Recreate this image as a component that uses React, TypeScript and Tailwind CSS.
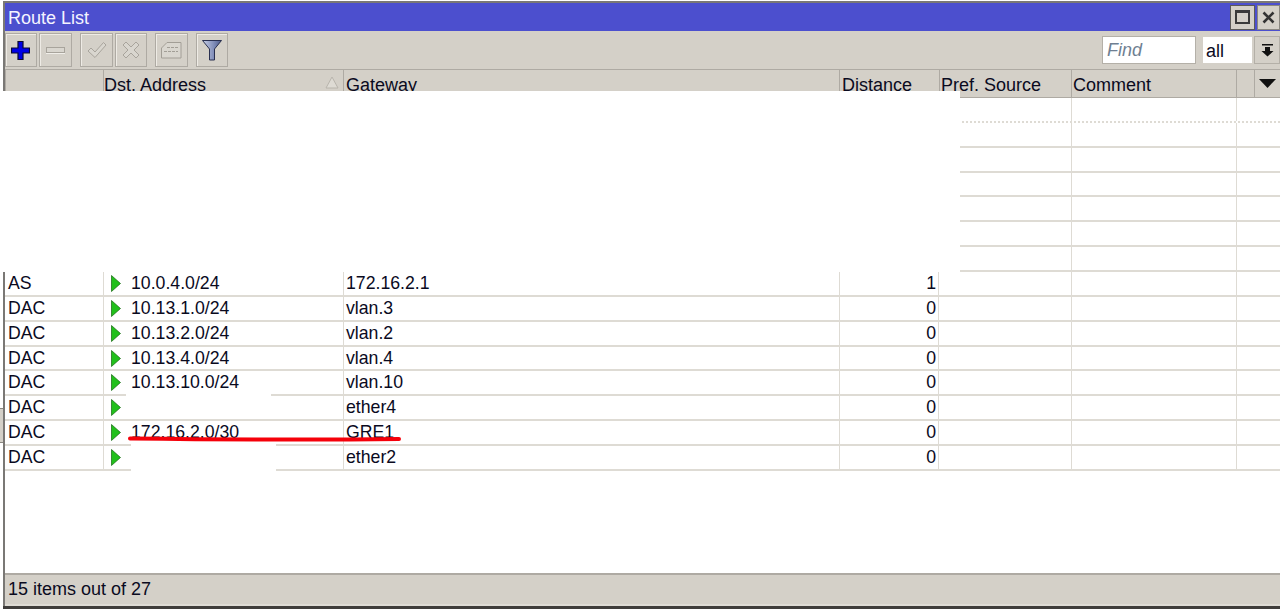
import React from 'react';

const rows = [
  { flags: 'AS', dst: '10.0.4.0/24', gateway: '172.16.2.1', distance: '1' },
  { flags: 'DAC', dst: '10.13.1.0/24', gateway: 'vlan.3', distance: '0' },
  { flags: 'DAC', dst: '10.13.2.0/24', gateway: 'vlan.2', distance: '0' },
  { flags: 'DAC', dst: '10.13.4.0/24', gateway: 'vlan.4', distance: '0' },
  { flags: 'DAC', dst: '10.13.10.0/24', gateway: 'vlan.10', distance: '0', mask: 'left-[22px] w-[145px]' },
  { flags: 'DAC', dst: '', gateway: 'ether4', distance: '0' },
  { flags: 'DAC', dst: '172.16.2.0/30', gateway: 'GRE1', distance: '0', mask: 'left-[27px] w-[145px]' },
  { flags: 'DAC', dst: '', gateway: 'ether2', distance: '0', mask: 'left-[27px] w-[145px]' },
];

function ToolButton({ className, children }: { className: string; children: React.ReactNode }) {
  return (
    <div className={`h-[34px] flex items-center justify-center border border-[#aeaaa3] shadow-[inset_1px_1px_0_#eeebe5] ${className}`}>
      {children}
    </div>
  );
}

function Arrow() {
  return (
    <svg width="10" height="17" viewBox="0 0 10 17" className="absolute left-[7px] top-[3px]">
      <path d="M0.5 0.5 L9.5 8.5 L0.5 16.5 Z" fill="#22c01c" stroke="#14660f" strokeWidth="0.7" />
    </svg>
  );
}

function EmptyRow({ first }: { first?: boolean }) {
  return (
    <div className={`flex h-[24.86px] border-b-2 border-[#dedbd4] ${first ? 'border-dotted border-[#a8a49c]' : ''}`}>
      <div className="w-[98px]" />
      <div className="w-[240px] border-l border-[#dedbd4]" />
      <div className="w-[496px] border-l border-[#dedbd4]" />
      <div className="w-[100px] border-l border-[#dedbd4]" />
      <div className="w-[132px] border-l border-[#dedbd4]" />
      <div className="w-[165px] border-l border-[#dedbd4]" />
      <div className="flex-1 border-l border-[#dedbd4]" />
    </div>
  );
}

export default function App() {
  return (
    <div className="relative w-[1280px] h-[609px] overflow-hidden bg-white text-[18px] leading-[22px] text-[#0a0a1e] font-['Liberation_Sans',Arial,sans-serif]">
      <div className="h-[605px] mt-px ml-[3px] flex flex-col border-t-2 border-l-2 border-[#7a7875] bg-white">
        {/* Title bar */}
        <div className="h-[28px] bg-[#4c4fce] flex items-center pl-[3px] text-[#f4f4ff]">
          <span className="flex-1 pt-[2px]">Route List</span>
          <div className="w-[25px] h-[25px] mr-[2px] flex items-center justify-center bg-[#d4d0c8] border border-[#5c5a58]">
            <div className="w-[15px] h-[14px] border-2 border-t-[3px] border-[#3a3a3a]" />
          </div>
          <div className="w-[23px] h-[25px] flex items-center justify-center bg-[#d4d0c8] border border-[#8a8780]">
            <svg width="13" height="13" viewBox="0 0 13 13">
              <path d="M1.5 1.5 L11.5 11.5 M11.5 1.5 L1.5 11.5" stroke="#333" strokeWidth="2.6" />
            </svg>
          </div>
        </div>

        {/* Toolbar */}
        <div className="h-[38px] bg-[#d4d0c8] flex items-center">
          <ToolButton className="w-[32px] pr-[2px]">
            <svg width="19" height="19" viewBox="0 0 19 19">
              <path d="M7 0.5 H12 V7 H18.5 V12 H12 V18.5 H7 V12 H0.5 V7 H7 Z" fill="#0000e6" stroke="#0a0a30" strokeWidth="1.2" />
            </svg>
          </ToolButton>
          <ToolButton className="w-[33px] ml-[2px]">
            <div className="w-[19px] h-[6px] border border-[#a8a49c] bg-[#d9d6cf] shadow-[0_1px_0_#f0eee9]" />
          </ToolButton>
          <ToolButton className="w-[33px] ml-[8px]">
            <svg width="20" height="18" viewBox="0 0 20 18">
              <path d="M1 10 L4 7 L8 11 L16.5 1.5 L19 4 L8 16.5 Z" fill="#d9d6cf" stroke="#a8a49c" strokeWidth="1" />
            </svg>
          </ToolButton>
          <ToolButton className="w-[32px] ml-[2px]">
            <svg width="18" height="18" viewBox="0 0 18 18">
              <path d="M4 1 L9 6 L14 1 L17 4 L12 9 L17 14 L14 17 L9 12 L4 17 L1 14 L6 9 L1 4 Z" fill="#d9d6cf" stroke="#a8a49c" strokeWidth="1" />
            </svg>
          </ToolButton>
          <ToolButton className="w-[33px] ml-[8px]">
            <svg width="21" height="17" viewBox="0 0 21 17">
              <path d="M0.5 6 L6 0.5 H20 V16 H0.5 Z" fill="#d9d6cf" stroke="#a29e96" strokeWidth="1" />
              <path d="M6 5.5 H17 M3 9.5 H17" stroke="#a29e96" strokeWidth="1" strokeDasharray="3 1" />
            </svg>
          </ToolButton>
          <ToolButton className="w-[32px] ml-[8px]">
            <svg width="20" height="21" viewBox="0 0 20 21">
              <defs>
                <linearGradient id="funnel" x1="0" x2="1" y1="0" y2="0">
                  <stop offset="0" stopColor="#c9d0e6" />
                  <stop offset="0.6" stopColor="#7f8cb8" />
                  <stop offset="1" stopColor="#4d5a8a" />
                </linearGradient>
              </defs>
              <path d="M0.5 0.5 H19.5 L12.5 9 V20 H7.5 V9 Z" fill="url(#funnel)" stroke="#2a3050" strokeWidth="1" />
            </svg>
          </ToolButton>
          <div className="flex-1" />
          <div className="w-[94px] h-[28px] bg-white border border-[#b4b0a8] pl-[4px] italic text-[#6f7f92] leading-[26px]">Find</div>
          <div className="w-[51px] h-[28px] ml-[6px] bg-white border border-[#d4d0c8] pl-[3px] leading-[28px]">all</div>
          <div className="w-[26px] h-[28px] ml-[1px] flex items-center justify-center border border-[#b4b0a8]">
            <svg width="13" height="14" viewBox="0 0 13 14">
              <path d="M1 1 H12 V2.5 H1 Z M4 4 H9 V8 H12.5 L6.5 13.5 L0.5 8 H4 Z" fill="#111" />
            </svg>
          </div>
        </div>

        {/* Column header */}
        <div className="h-[29px] flex bg-[#d4d0c8] border-y border-[#aeaaa3] leading-[30px]">
          <div className="w-[98px] border-l border-[#aeaaa3]" />
          <div className="w-[240px] border-l border-[#aeaaa3] relative">
            Dst. Address
            <svg width="14" height="13" viewBox="0 0 14 13" className="absolute right-[4px] top-[6px]">
              <path d="M7 1 L13 12 H1 Z" fill="#dedbd4" stroke="#b8b4ac" strokeWidth="1" />
            </svg>
          </div>
          <div className="w-[496px] border-l border-[#aeaaa3] pl-[2px]">Gateway</div>
          <div className="w-[100px] border-l border-[#aeaaa3] pl-[2px]">Distance</div>
          <div className="w-[132px] border-l border-[#aeaaa3] pl-[1px]">Pref. Source</div>
          <div className="w-[165px] border-l border-[#aeaaa3] pl-[1px]">Comment</div>
          <div className="w-[18px] border-l border-[#aeaaa3]" />
          <div className="flex-1 border-l border-[#aeaaa3] flex items-center justify-center">
            <svg width="17" height="9" viewBox="0 0 17 9">
              <path d="M0 0 H17 L8.5 9 Z" fill="#111" />
            </svg>
          </div>
        </div>

        {/* Table body */}
        <div className="flex-1 text-[17.7px]">
          <EmptyRow first />
          {Array.from({ length: 6 }).map((_, i) => (
            <EmptyRow key={i} />
          ))}
          {rows.map((row) => (
            <div key={row.flags + row.gateway} className="flex h-[24.86px] border-b-2 border-[#dedbd4]">
              <div className="w-[98px] pl-[3px]">{row.flags}</div>
              <div className="w-[240px] border-l border-[#dedbd4] pl-[27px] relative">
                <Arrow />
                {row.dst}
                {row.mask && <div className={`absolute top-[22.86px] h-[2px] bg-white ${row.mask}`} />}
              </div>
              <div className="w-[496px] border-l border-[#dedbd4] pl-[2px]">{row.gateway}</div>
              <div className="w-[100px] border-l border-r border-[#dedbd4] text-right pr-[2px]">{row.distance}</div>
              <div className="w-[132px]" />
              <div className="w-[165px] border-l border-[#dedbd4]" />
              <div className="flex-1 border-l border-[#dedbd4]" />
            </div>
          ))}
        </div>

        {/* Status bar */}
        <div className="h-[33px] bg-[#d4d0c8] border-t-2 border-b-2 border-t-[#aeaaa3] border-b-[#dedbd4] pl-[3px] leading-[28px]">15 items out of 27</div>
      </div>
      <div className="h-[3px] bg-[#3f3d3b] ml-[3px]" />

      {/* White box pasted over the hidden routes */}
      <div className="absolute left-0 top-[91px] w-[960px] h-[181px] bg-white" />

      {/* Edge of the window behind */}
      <div className="absolute left-0 top-[408px] w-[3px] h-[35px] bg-[#d4d0c8] border-y border-[#8a8780]" />

      {/* Red pen mark */}
      <svg width="280" height="8" viewBox="0 0 280 8" className="absolute left-[125px] top-[435px]">
        <path d="M5 3.5 C90 4.5 190 5 274 4" stroke="#f5000a" strokeWidth="4" strokeLinecap="round" fill="none" />
      </svg>
    </div>
  );
}
